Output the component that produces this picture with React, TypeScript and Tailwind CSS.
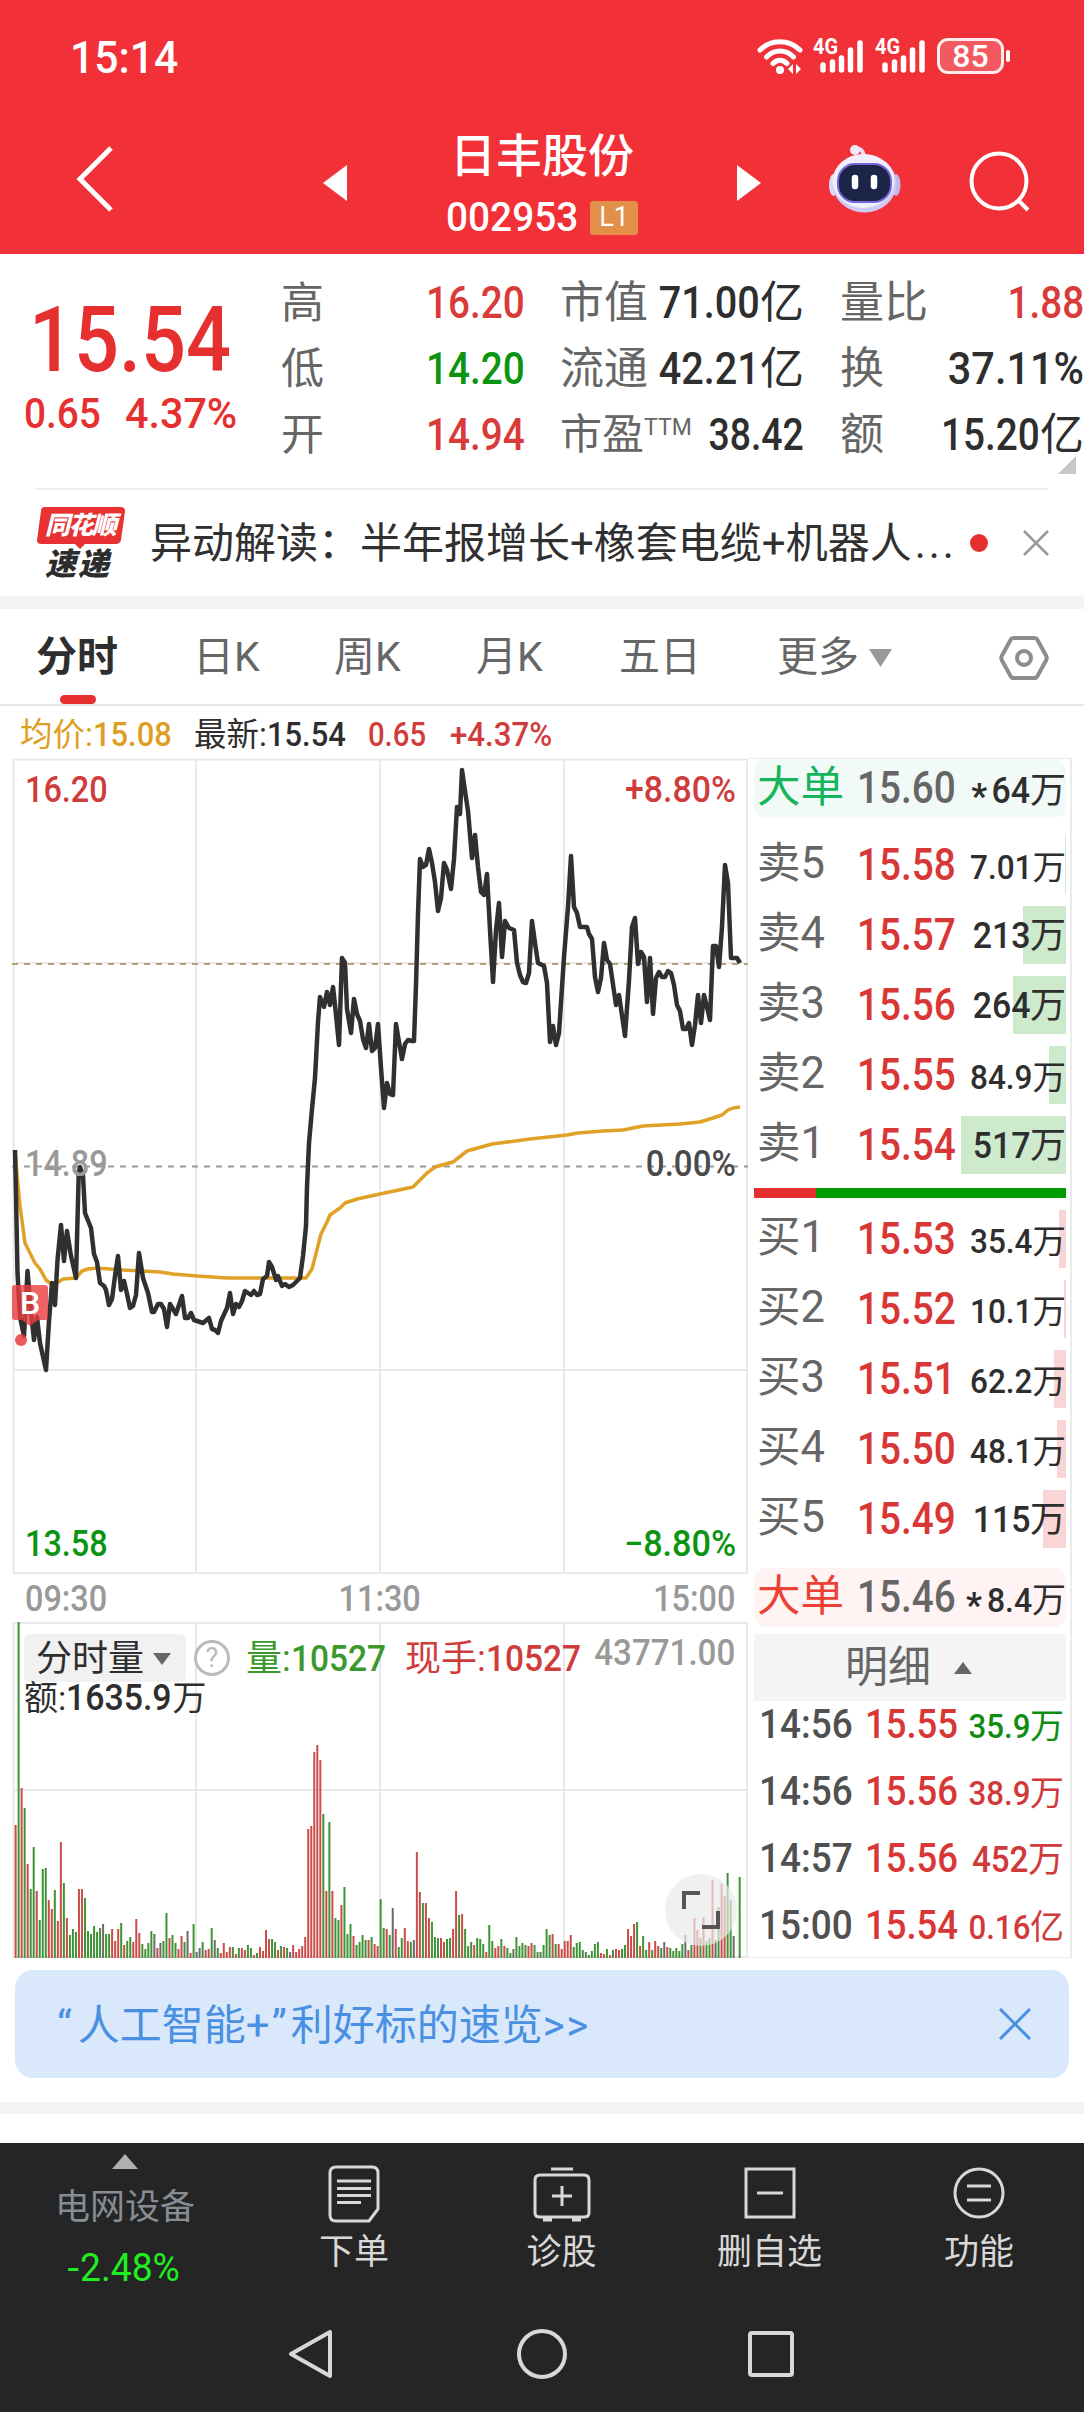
import type { ReactNode } from "react";
import clsx from "clsx";
import { twMerge } from "tailwind-merge";

const PRICE =
  "15,1150 16,1195 17.5,1273 20,1317 24,1336 27.5,1271 31,1312 34,1340 37,1317 40,1343 46,1370 49,1321 52,1283 55,1305 57.5,1260 61,1225 64,1261 67,1231 71,1256 76,1278 78.7,1174 80,1167 83,1176 85,1213 91,1228 94,1254 97,1262 100,1283 104,1286 106,1290 109,1305 112,1299 115,1276 118,1256 121,1290 124,1281 127,1294 130,1308 133,1306 136,1295 139,1253 143,1278 148,1293 152,1312 154,1312 158,1304 161,1304 164,1309 167,1327 170,1304 176,1314 182,1296 185,1318 188,1318 191,1313 194,1320 203,1323 209,1318 212,1329 215,1330 218,1333 221,1321 227,1308 230,1293 233,1314 236,1304 239,1307 242,1301 245,1291 251,1295 254,1291 257,1295 260,1294 263,1279 267,1276 269,1262 272,1267 276,1280 278,1276 282,1286 285,1284 289,1287 293,1285 300,1278 303,1256 306,1226 307,1187 309,1143 312,1109 315,1078 318,1022 320,997 324,1007 327,992 330,1005 333,987 335,1005 339,1045 342,958 345,963 347,1009 351,1033 354,999 357,1014 360,1021 363,1039 366,1048 369,1024 372,1051 375,1048 378,1024 381,1068 384,1108 387,1083 390,1094 393,1095 396,1024 399,1042 402,1059 405,1044 408,1040 412,1041 414,1041 416,985 418,914 420,859 423,867 426,865 429,849 432,863 435,882 438,911 441,898 444,863 447,870 451,889 454,859 457,807 460,814 462,770 465,791 468,811 472,858 475,835 478,867 481,892 484,895 487,874 490,930 493,982 496,930 499,903 502,957 505,921 509,928 514,930 517,963 520,975 523,982 526,983 529,973 532,921 535,943 538,963 544,966 547,983 550,1042 553,1026 556,1045 559,1033 564,957 568,907 571,856 574,907 577,913 580,927 587,927 589,934 592,939 595,977 598,992 601,978 604,943 607,960 610,964 616,1005 619,995 625,1036 629,980 632,927 635,918 638,964 641,952 644,957 647,1002 650,958 653,1014 656,978 659,972 662,977 665,977 668,971 671,973 674,985 677,1005 680,1011 683,1029 686,1029 689,1023 692,1045 695,1025 698,995 701,1023 704,995 707,1007 710,1020 713,946 716,946 719,967 722,927 725,865 728,883 731,958 737,958 740,963";

const AVERAGE =
  "15,1150 17,1174 20,1206 25,1243 30,1253 35,1263 40,1269 46,1280 50,1283 57,1283 63,1279 76,1278 82,1271 88,1269 97,1268 123,1270 160,1272 173,1274 197,1276 227,1278 306,1278 312,1269 321,1234 327,1222 330,1215 340,1208 345,1203 357,1199 380,1194 413,1187 427,1173 435,1167 453,1162 467,1151 492,1144 530,1139 567,1135 578,1133 603,1131 623,1130 643,1126 680,1124 700,1122 713,1118 722,1115 728,1110 733,1108 740,1107";

// r = up, g = down, k = flat; the number is the bar height
const VOLUME =
  "r133 g336 r170 g150 r94 g69 g111 r67 g38 g89 g90 r58 r49 g68 r37 r116 g75 r40 g23 g29 g26 r69 r69 g60 g27 g24 g32 g26 g30 k34 g24 g24 r29 r17 r29 g35 r13 g17 g21 r16 r39 r25 g14 g9 g15 g27 k24 r10 k15 g17 g45 r20 g23 g15 r9 r22 g16 k27 r5 g34 k6 k10 g16 r8 r9 g30 k18 g10 r5 r15 r6 r11 g11 r4 g10 r10 r8 g13 g10 r3 g5 r11 r7 r28 r19 g19 g16 r8 g12 r11 g10 k6 r13 r6 r9 r12 r21 r129 r132 r206 r213 r198 g144 r67 g136 r67 g40 g38 r53 g71 g24 g34 r22 g13 g16 g23 g18 r18 g21 r14 r12 g59 g30 r29 g23 k50 r29 g11 g20 r30 r17 g16 k18 r106 r66 g55 r55 r40 g36 g21 g20 r20 r16 g19 g20 r29 r67 g43 r44 g29 g12 g16 r13 g20 g19 g14 r6 g33 g17 r10 r12 g19 r12 g10 g5 k9 g21 g12 g15 g13 r12 r15 g13 g6 k6 g13 g29 g23 r24 g14 r14 r9 r17 r17 r23 g11 g15 g16 g8 k6 g3 g7 g14 g16 r5 r4 g9 r3 g8 r9 r8 g9 g13 r29 r22 r34 g36 r12 g22 g8 r16 g8 r17 r12 g10 k16 r11 g10 g7 g10 g7 g14 k23 r8 g13 r40 r28 g20 r41 g17 g20 r78 k18 g51 r74 r62 g85 g58 k22 k0 g81";

const BAR_COLORS: Record<string, string> = { r: "#cb4c4a", g: "#3f9436", k: "#6b6b6b" };

const SELLS = [
  { label: "卖5", price: "15.58", amount: "7.01", depth: 1 },
  { label: "卖4", price: "15.57", amount: "213", depth: 43 },
  { label: "卖3", price: "15.56", amount: "264", depth: 53 },
  { label: "卖2", price: "15.55", amount: "84.9", depth: 17 },
  { label: "卖1", price: "15.54", amount: "517", depth: 105 },
];

const BUYS = [
  { label: "买1", price: "15.53", amount: "35.4", depth: 7 },
  { label: "买2", price: "15.52", amount: "10.1", depth: 2 },
  { label: "买3", price: "15.51", amount: "62.2", depth: 12 },
  { label: "买4", price: "15.50", amount: "48.1", depth: 9 },
  { label: "买5", price: "15.49", amount: "115", depth: 23 },
];

const TICKS = [
  { time: "14:56", price: "15.55", amount: "35.9", unit: "万", up: false },
  { time: "14:56", price: "15.56", amount: "38.9", unit: "万", up: true },
  { time: "14:57", price: "15.56", amount: "452", unit: "万", up: true },
  { time: "15:00", price: "15.54", amount: "0.16", unit: "亿", up: true },
];

// Digits are drawn slightly narrower than the text face
const Num = ({ children, className }: { children: ReactNode; className?: string }) => (
  <span className={twMerge("inline-block origin-left scale-x-90 font-medium", className)}>{children}</span>
);

const SignalBars = () => (
  <svg width="52" height="38" viewBox="0 0 52 38" className="overflow-visible text-white">
    <text x="0" y="17" fontSize="22" fontWeight="700" fill="currentColor" textLength="25" lengthAdjust="spacingAndGlyphs">
      4G
    </text>
    <g stroke="currentColor" strokeWidth="5.5" strokeLinecap="round">
      <path d="M10 33v-5M19.500 33v-8M28.500 33V21M37.500 33V13M47 33V6" />
    </g>
  </svg>
);

const StatusBar = () => (
  <div className="flex h-28 items-center justify-between pl-[70px] pr-[74px] pt-[3px] text-white">
    <span className="text-[44px] font-medium leading-none">
      <Num className="scale-x-[0.97]">15:14</Num>
    </span>
    <div className="-mt-1 flex items-center">
      <svg width="48" height="38" viewBox="0 0 48 38" fill="none" stroke="currentColor" strokeWidth="5" strokeLinecap="round">
        <path d="M3 13c11-11 29-11 40 0M9.500 20c7.500-8 19.500-8 27 0M16 26.500c4-4.500 10-4.500 14 0" />
        <circle cx="23" cy="33" r="4" fill="currentColor" stroke="none" />
        <path d="M36 27v10l-5-5zM39 27v10l5-5z" fill="currentColor" stroke="none" />
      </svg>
      <div className="ml-2 flex gap-2.5">
        <SignalBars />
        <SignalBars />
      </div>
      <div className="ml-2.5 flex h-9 w-[67px] items-center justify-center rounded-[11px] border-[3px] border-white/90 bg-white/20 text-[32px] font-medium leading-none">
        85
      </div>
      <div className="ml-0.5 h-3 w-1 rounded-full bg-white" />
    </div>
  </div>
);

const Robot = () => (
  <svg width="76" height="70" viewBox="0 0 76 70" fill="none">
    <path d="M26 7c6-5 12-1 10 8" stroke="#e9dcf5" strokeWidth="4" />
    <circle cx="28" cy="6" r="5" fill="#f1e9fb" />
    <ellipse cx="6.500" cy="41" rx="4.500" ry="11" fill="#dcd8f7" />
    <ellipse cx="69" cy="41" rx="4.500" ry="11" fill="#bfb6ee" />
    <ellipse cx="37.500" cy="39.500" rx="32" ry="29" fill="#cfcaf5" />
    <ellipse cx="36.500" cy="37" rx="31" ry="27" fill="#f1eefe" />
    <rect x="11" y="20" width="53" height="38" rx="17" fill="#1c2547" stroke="#7466d8" strokeWidth="2" />
    <path d="M28 34v8M47 34v8" stroke="#fff" strokeWidth="6.500" strokeLinecap="round" />
  </svg>
);

const TitleBar = () => (
  <div className="flex h-[142px] items-center text-white">
    <svg width="40" height="68" viewBox="0 0 40 68" className="ml-[75px] mt-[-8px]" fill="none" stroke="currentColor" strokeWidth="5">
      <path d="M36 3 5 34l31 31" />
    </svg>
    <svg width="24" height="36" viewBox="0 0 24 36" className="ml-52">
      <path d="M24 0v36L0 18z" fill="currentColor" />
    </svg>
    <div className="flex w-[390px] flex-col items-center">
      <div className="mt-[3px] text-[46px] font-medium leading-[58px]">日丰股份</div>
      <div className="mt-2 flex h-[50px] items-center">
        <span className="w-[134px] text-[40px] leading-none">
          <Num className="scale-x-[0.97]">002953</Num>
        </span>
        <span className="ml-2.5 flex h-[34px] w-12 items-center justify-center rounded-[3px] bg-[#e28f4a] text-[27px] leading-none">
          L1
        </span>
      </div>
    </div>
    <svg width="24" height="36" viewBox="0 0 24 36">
      <path d="M0 0v36l24-18z" fill="currentColor" />
    </svg>
    <div className="ml-[66px] mt-[-8px]">
      <Robot />
    </div>
    <svg width="64" height="64" viewBox="0 0 64 64" className="ml-[66px] mt-[-1px]" fill="none" stroke="currentColor" strokeWidth="4">
      <circle cx="30" cy="30" r="27.500" />
      <path d="m49 49 10 10" />
    </svg>
  </div>
);

const Quote = () => (
  <div className="flex h-[234px] text-[43px]">
    <div className="w-[270px] pt-[43px] text-[#e63030]">
      <div className="pl-[29px] text-[90px] font-medium leading-[88px]">
        <Num className="scale-x-[0.88]">15.54</Num>
      </div>
      <div className="flex pl-[24px] pt-[6px] leading-[44px]">
        <span className="w-[101px]">
          <Num>0.65</Num>
        </span>
        <Num className="scale-x-[0.96]">4.37%</Num>
      </div>
    </div>
    <div className="flex w-[255px] flex-col pl-[11px] pt-4 leading-[66px]">
      {[
        ["高", "16.20", "text-[#d93a3a]"],
        ["低", "14.20", "text-[#0b9410]"],
        ["开", "14.94", "text-[#d93a3a]"],
      ].map(([label, value, color]) => (
        <div key={label} className="flex h-[66px] justify-between">
          <span className="text-[#666]">{label}</span>
          <Num className={clsx("origin-right scale-x-[0.86] text-[45px]", color)}>{value}</Num>
        </div>
      ))}
    </div>
    <div className="flex w-[279px] flex-col pl-[35px] pt-4 leading-[66px]">
      {[
        ["市值", "71.00", "亿"],
        ["流通", "42.21", "亿"],
        ["市盈", "38.42", ""],
      ].map(([label, value, unit]) => (
        <div key={label} className="flex h-[66px] justify-between whitespace-nowrap">
          <span className={clsx("w-[88px] shrink-0 text-[#666]", unit ? "text-[44px]" : "text-[42px]")}>
            {label}
            {!unit && <sup className="top-[-0.6em] inline-block w-0 text-[23px]">TTM</sup>}
          </span>
          <span className="flex w-0 grow justify-end text-[#2e2e2e]">
            <Num className={clsx("origin-right text-[45px]", unit ? "scale-x-[0.88]" : "scale-x-[0.83]")}>{value}</Num>
            {unit && <span className="text-[44px]">{unit}</span>}
          </span>
        </div>
      ))}
    </div>
    <div className="relative flex w-[280px] flex-col pl-[36px] pt-4 leading-[66px]">
      {[
        ["量比", "1.88", "", "text-[#d93a3a]"],
        ["换", "37.11%", "", "text-[#2e2e2e]"],
        ["额", "15.20", "亿", "text-[#2e2e2e]"],
      ].map(([label, value, unit, color]) => (
        <div key={label} className={clsx("flex h-[66px] justify-between whitespace-nowrap text-[44px]", color)}>
          <span className="text-[#666]">{label}</span>
          <span className="flex">
            <Num className={clsx("origin-right text-[45px]", value.endsWith("%") ? "scale-x-[0.92]" : "scale-x-[0.86]")}>{value}</Num>
            {unit}
          </span>
        </div>
      ))}
      <svg width="18" height="18" viewBox="0 0 18 18" className="absolute right-[8px] top-[202px]">
        <path d="M18 0v18H0z" fill="#c8c8c8" />
      </svg>
    </div>
  </div>
);

const News = () => (
  <div className="flex h-[106px] items-center">
    <div className="relative ml-[37px] h-[72px] w-[88px] font-black italic">
      <svg width="88" height="42" viewBox="0 0 88 42" className="absolute">
        <path d="M8 0h76q4 0 4 4l-4 29q-1 4-5 4H48l-5 5-5-5H4q-4 0-4-4L4 4q0-4 4-4z" fill="#e73133" />
      </svg>
      <div className="relative pl-[8px] text-[25px] leading-[37px] tracking-[-1.500px] text-white">同花顺</div>
      <div className="relative pl-2 pt-1 text-[31px] leading-[34px] tracking-[2px] text-[#2c2c2c]">速递</div>
    </div>
    <div className="ml-[25px] w-[820px] shrink-0 whitespace-nowrap text-[42px] text-[#303030]">
      异动解读：半年报增长+橡套电缆+机器人<span className="ml-[3px] tracking-[3px]">...</span>
    </div>
    <div className="size-[18px] rounded-full bg-[#e63030]" />
    <svg width="26" height="26" viewBox="0 0 26 26" className="ml-[35px]" stroke="#999" strokeWidth="2.500">
      <path d="m1 1 24 24M25 1 1 25" />
    </svg>
  </div>
);

const Tabs = () => (
  <div className="relative flex h-[97px] items-center border-b-2 border-[#e6e6e6] pt-0.5 text-[41px] text-[#666]">
    <span className="ml-[36px] w-[157px] font-bold text-[#2e2e2e]">分时</span>
    <span className="w-[141px]">日K</span>
    <span className="w-[142px]">周K</span>
    <span className="w-[143px]">月K</span>
    <span className="w-[158px]">五日</span>
    <span className="w-[92px]">更多</span>
    <svg width="23" height="18" viewBox="0 0 23 18">
      <path d="M0 0h23L11.500 18z" fill="#999" />
    </svg>
    <svg width="50" height="46" viewBox="0 0 50 46" className="ml-[107px]" fill="none" stroke="#8d8d8d" strokeWidth="4">
      <path d="M14.500 3h21q2 0 3 2l8.500 15.500q1.500 2.500 0 5L38.500 41q-1 2-3 2h-21q-2 0-3-2L3 25.500q-1.500-2.500 0-5L11.500 5q1-2 3-2z" />
      <circle cx="25" cy="23" r="7" />
    </svg>
    <div className="absolute bottom-0 left-[60px] h-[9px] w-9 rounded-full bg-[#e63030]" />
  </div>
);

const PriceChart = () => (
  <div className="relative h-[816px]">
    <svg width="748" height="816" viewBox="0 758 748 816" fill="none">
      <path d="M13 759.500H748M13 963H748M13 1370H748M13 1573H748M13.500 759V1573M196 759V1573M380 759V1573M564 759V1573M747 759V1573" stroke="#e9e9e9" strokeWidth="2" />
      <path d="M12 964H748" stroke="#b5a078" strokeWidth="2" strokeDasharray="6 6" />
      <path d="M12 1166.500H748" stroke="#999" strokeWidth="2" strokeDasharray="6 6" />
      <polyline points={AVERAGE} stroke="#dfa126" strokeWidth="3.500" strokeLinejoin="round" />
      <polyline points={PRICE} stroke="#303030" strokeWidth="4.500" strokeLinejoin="round" />
      <path d="M15 1285h30q3 0 3 3v29q0 3-3 3h-7l-8 6-8-6h-7q-3 0-3-3v-29q0-3 3-3z" fill="#e83c40" fillOpacity="0.8" />
      <circle cx="21" cy="1340" r="6" fill="#e83c40" fillOpacity="0.85" />
      <text x="20" y="1314" fontSize="32" fill="#fff" fontWeight="500">
        B
      </text>
    </svg>
    <div className="absolute left-[25px] top-[12px] text-[36px] leading-10 text-[#cf3c3c]">
      <Num>16.20</Num>
    </div>
    <div className="absolute right-[12px] top-[12px] text-[36px] leading-10 text-[#cf3c3c]">
      <Num className="origin-right scale-x-[0.94]">+8.80%</Num>
    </div>
    <div className="absolute left-[25px] top-[386px] text-[36px] leading-10 text-[#999]">
      <Num>14.89</Num>
    </div>
    <div className="absolute right-[12px] top-[386px] text-[36px] leading-10 text-[#4a4a4a]">
      <Num className="origin-right scale-x-[0.92]">0.00%</Num>
    </div>
    <div className="absolute bottom-[10px] left-[25px] text-[36px] leading-10 text-[#0b9410]">
      <Num>13.58</Num>
    </div>
    <div className="absolute bottom-[10px] right-[12px] text-[36px] leading-10 text-[#0b9410]">
      <Num className="origin-right scale-x-[0.95]">−8.80%</Num>
    </div>
  </div>
);

const VolumeChart = () => (
  <div className="relative h-[336px]">
    <svg width="748" height="336" viewBox="0 1622 748 336" fill="none">
      <path d="M13 1623H748M13 1790H748M13 1957H748M13.500 1622V1958M196 1622V1958M380 1622V1958M564 1622V1958M747 1622V1958" stroke="#e9e9e9" strokeWidth="2" />
      {VOLUME.split(" ").map((bar, i) => {
        const height = Number(bar.slice(1));
        return <rect key={i} x={14.6 + i * 3.017} y={1958 - height} width="2" height={height} fill={BAR_COLORS[bar[0]]} />;
      })}
    </svg>
    <div className="absolute left-6 top-3 flex h-12 items-center text-[36px] leading-none">
      <div className="flex h-12 w-[162px] items-center rounded-md bg-[#f1f1f1] pl-3 pt-0.5 text-[#2e2e2e]">
        分时量
        <svg width="18" height="12" viewBox="0 0 18 12" className="ml-[9px]">
          <path d="M0 0h18L9 12z" fill="#666" />
        </svg>
      </div>
      <div className="ml-2 flex size-9 items-center justify-center rounded-full border-[3px] border-[#bbb] text-[27px] text-[#bbb]">?</div>
      <div className="ml-4 w-[159px] whitespace-nowrap pt-0.5 text-[#3d982b]">
        量:<Num className="scale-x-[0.93]">10527</Num>
      </div>
      <div className="whitespace-nowrap pt-0.5 text-[#d03c3c]">
        现手:<Num className="scale-x-[0.93]">10527</Num>
      </div>
    </div>
    <div className="absolute right-[13px] top-[11px] text-[36px] leading-10 text-[#999]">
      <Num className="origin-right scale-x-[0.92]">43771.00</Num>
    </div>
    <div className="absolute left-[24px] top-[56px] flex text-[34px] leading-10 text-[#2e2e2e]">
      额:
      <Num className="-mr-1.5 scale-x-[0.94] text-[36px]">1635.9</Num>万
    </div>
    <div className="absolute bottom-3 right-[11px] flex size-[72px] items-center justify-center rounded-full bg-[#e9e9e9]/70">
      <svg width="38" height="38" viewBox="0 0 38 38" fill="none" stroke="#555" strokeWidth="4">
        <path d="M2 18V2h16M36 20v16H20" />
      </svg>
    </div>
  </div>
);

const BigOrder = ({ price, amount, sell }: { price: string; amount: string; sell?: boolean }) => (
  <div
    className={clsx(
      "flex h-[59px] items-center rounded-xl pl-[3px] leading-none",
      sell ? "bg-[#f1faf6] text-[#15b55c]" : "bg-[#fff3f3] text-[#ea4335]",
    )}
  >
    <span className="-mt-0.5 w-[100px] text-[43.500px]">大单</span>
    <Num className="-mt-0.5 w-[100px] scale-x-[0.86] text-[45px] text-[#666]">{price}</Num>
    <span
      className={clsx(
        "flex w-0 grow items-center justify-end whitespace-nowrap pt-1 text-[#2e2e2e]",
        sell ? "text-[36px]" : "text-[34px]",
      )}
    >
      <span className="mr-0.5 pt-3 text-[35px] font-bold">*</span>
      <Num className="origin-right scale-x-[0.94]">{amount}</Num>万
    </span>
  </div>
);

const Level = ({ label, price, amount, depth, tint }: { label: string; price: string; amount: string; depth: number; tint: string }) => (
  <div className="relative flex h-[58px] items-center pl-[3px] leading-none">
    <div className={clsx("absolute inset-y-0 right-0", tint)} style={{ width: depth }} />
    <span className="relative -mt-0.5 w-[100px] text-[43.500px] text-[#666]">{label}</span>
    <Num className="relative -mt-0.5 w-[100px] scale-x-[0.86] text-[45px] text-[#d93636]">{price}</Num>
    <span className={clsx("relative flex w-0 grow justify-end text-[#2e2e2e]", amount.length > 3 ? "pt-[5px] text-[33.500px]" : "pt-0.5 text-[36px]")}>
      <Num className="origin-right scale-x-[0.94]">{amount}</Num>万
    </span>
  </div>
);

const OrderBook = () => (
  <div className="h-[1200px] w-[324px] border-y border-r-2 border-[#ebebeb] pl-1.5 pr-[4px]">
    <BigOrder sell price="15.60" amount="64" />
    <div className="mt-[18px] flex flex-col gap-3">
      {SELLS.map((row) => (
        <Level key={row.label} {...row} tint="bg-[#cdeacd]" />
      ))}
    </div>
    <div className="mt-3.5 flex h-2.5 bg-[#009b00]">
      <div className="w-[62px] bg-[#e63030]" />
    </div>
    <div className="mb-5 mt-3 flex flex-col gap-3">
      {BUYS.map((row) => (
        <Level key={row.label} {...row} tint="bg-[#fad5d5]" />
      ))}
    </div>
    <BigOrder price="15.46" amount="8.4" />
    <div className="mt-[7px] flex h-[67px] items-center bg-[#f4f4f4] pl-[91px] text-[43px] leading-none text-[#666]">
      明细
      <svg width="18" height="12" viewBox="0 0 18 12" className="ml-[23px]">
        <path d="M0 12h18L9 0z" fill="#666" />
      </svg>
    </div>
    {TICKS.map((tick, i) => (
      <div key={i} className="flex h-[67px] items-center pb-[21px] pl-[5px] pr-0.5 leading-none text-[#505050]">
        <Num className="w-[106px] text-[41px]">{tick.time}</Num>
        <Num className="w-[96px] scale-x-[0.89] text-[41px] text-[#d93636]">{tick.price}</Num>
        <span
          className={clsx(
            "flex w-0 grow justify-end pt-1",
            tick.amount.length > 3 ? "text-[34px]" : "text-[36px]",
            tick.up ? "text-[#d03a3a]" : "text-[#0f8d12]",
          )}
        >
          <Num className="origin-right scale-x-[0.92]">{tick.amount}</Num>
          {tick.unit}
        </span>
      </div>
    ))}
  </div>
);

const Banner = () => (
  <div className="mx-[15px] mt-3 flex h-[108px] items-center justify-between rounded-[18px] bg-[#d9e8fa] pl-[42px] pr-[38px] pt-0.5 text-[42px] text-[#4a90e2]">
    <span>
      <span className="mr-1.5">“</span>人工智能+<span className="ml-0.5 mr-1">”</span>利好标的速览<span className="tracking-[1.500px]">&gt;&gt;</span>
    </span>
    <svg width="32" height="32" viewBox="0 0 32 32" className="-mt-0.5" stroke="currentColor" strokeWidth="3">
      <path d="m1 1 30 30M31 1 1 31" />
    </svg>
  </div>
);

const NavItem = ({ label, className, children }: { label: string; className: string; children: ReactNode }) => (
  <div className={clsx("flex flex-col items-center pt-[20px]", className)}>
    <svg width="60" height="60" viewBox="0 0 60 60" fill="none" stroke="currentColor" strokeWidth="3">
      {children}
    </svg>
    <span className="mt-[10px] text-[35px] leading-10">{label}</span>
  </div>
);

const BottomBar = () => (
  <div className="h-[269px] bg-[#252525] text-[#d8d8d8]">
    <div className="flex h-[170px]">
      <div className="flex w-[250px] flex-col items-center pt-[11px]">
        <svg width="26" height="15" viewBox="0 0 26 15">
          <path d="M0 15h26L13 0z" fill="#b0b0b0" />
        </svg>
        <span className="mt-[19px] text-[35px] leading-10 text-[#868d94]">电网设备</span>
        <span className="mt-[20px] text-[38px] leading-10 text-[#21ee21]">
          <span className="mr-0.5 inline-block scale-x-110">-</span>
          <Num className="font-normal scale-x-[0.98]">2.48%</Num>
        </span>
      </div>
      <NavItem label="下单" className="w-[208px]">
        <path d="M12 4h36q6 0 6 6v36l-9 12H12q-6 0-6-6V10q0-6 6-6z" />
        <path d="M13 18h34M13 25.500h34M13 32.500h34M13 39.500h24" />
      </NavItem>
      <NavItem label="诊股" className="w-[207px]">
        <path d="M19 6h22M8 12h44q5 0 5 5v33q0 4-5 4H8q-5 0-5-4V17q0-5 5-5zM30 23v20M20 33h20" />
        <path d="M11 56.500h9M40 56.500h9" strokeWidth="4" />
      </NavItem>
      <NavItem label="删自选" className="w-[209px]">
        <path d="M6 6h48v48H6zM17 30h26" />
      </NavItem>
      <NavItem label="功能" className="w-[210px]">
        <circle cx="30" cy="30" r="24" />
        <path d="M18 23h24M18 37h24" />
      </NavItem>
    </div>
    <div className="flex pl-[288px]">
      <svg width="520" height="80" viewBox="288 2313 520 80" fill="none" stroke="currentColor" strokeWidth="4" strokeLinejoin="round">
        <path d="M330 2332v44l-39-22z" />
        <circle cx="542" cy="2354" r="23" />
        <rect x="750" y="2333" width="42" height="42" rx="2" />
      </svg>
    </div>
  </div>
);

const App = () => {
  return (
    <div className="flex h-[2412px] w-[1084px] flex-col overflow-hidden bg-white font-[Roboto,'Noto_Sans_CJK_SC',sans-serif]">
      <div className="h-[254px] bg-[#f13038]">
        <StatusBar />
        <TitleBar />
      </div>
      <Quote />
      <div className="ml-9 mr-9 h-0.5 bg-[#ececec]" />
      <News />
      <div className="h-[13px] bg-[#f4f4f4]" />
      <Tabs />
      <div className="flex h-[52px] items-center whitespace-nowrap pt-1.5 text-[32.500px] leading-none text-[#2e2e2e]">
        <span className="ml-5 w-[174px] text-[#dd9f22]">
          均价:<Num className="scale-x-[0.95]">15.08</Num>
        </span>
        <span className="w-[174px]">
          最新:<Num className="scale-x-[0.95]">15.54</Num>
        </span>
        <span className="w-[82px] text-[#d03c3c]">
          <Num>0.65</Num>
        </span>
        <span className="text-[#d03c3c]">
          <Num className="scale-x-[0.96]">+4.37%</Num>
        </span>
      </div>
      <div className="flex">
        <div className="w-[748px]">
          <PriceChart />
          <div className="flex h-12 items-center justify-between pl-[25px] pr-[13px] pt-0.5 text-[36px] leading-none text-[#999]">
            <Num>09:30</Num>
            <Num className="origin-center">11:30</Num>
            <Num className="origin-right">15:00</Num>
          </div>
          <VolumeChart />
        </div>
        <OrderBook />
      </div>
      <Banner />
      <div className="mt-6 h-3 shrink-0 bg-[#f4f4f4]" />
      <div className="mt-auto">
        <BottomBar />
      </div>
    </div>
  );
};

export default App;
